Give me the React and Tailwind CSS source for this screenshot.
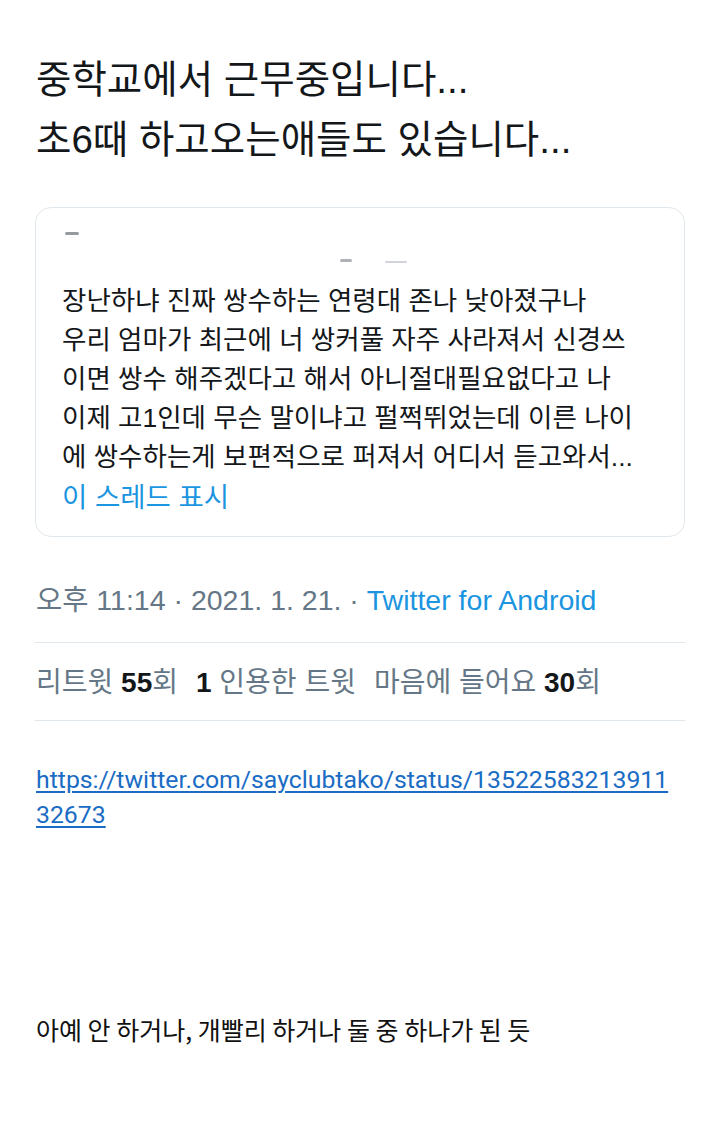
export default function App() {
  const kr = { fontFamily: '"Liberation Sans", "Noto Sans CJK KR", sans-serif' };
  return (
    <div className="w-[720px] h-[1147px] bg-white overflow-hidden" style={kr}>
      <div className="pt-[50px] px-[36px] text-[38.5px] leading-[60px] text-[#14171a]">
        <p>중학교에서 근무중입니다...</p>
        <p>초6때 하고오는애들도 있습니다...</p>
      </div>

      <div className="mx-[35px] mt-[37px] h-[330px] rounded-[16px] border border-[#e1e8ed] pl-[26px] text-[#14171a]">
        <div className="h-[74px] pt-[24px]">
          <div className="ml-[3px] h-[3px] w-[14px] rounded-full bg-[#6b7079] opacity-70 blur-[0.5px]"></div>
          <div className="mt-[22px] flex items-center">
            <div className="ml-[278px] h-[3px] w-[12px] rounded-full bg-[#7a7f88] opacity-60 blur-[0.5px]"></div>
            <div className="ml-[33px] mt-[4px] h-[2px] w-[22px] rounded-full bg-[#b0b5bd] opacity-60"></div>
          </div>
        </div>
        <div className="text-[26.5px] leading-[39px] whitespace-nowrap">
          <p>장난하냐 진짜 쌍수하는 연령대 존나 낮아졌구나</p>
          <p>우리 엄마가 최근에 너 쌍커풀 자주 사라져서 신경쓰</p>
          <p>이면 쌍수 해주겠다고 해서 아니절대필요없다고 나</p>
          <p>이제 고1인데 무슨 말이냐고 펄쩍뛰었는데 이른 나이</p>
          <p>에 쌍수하는게 보편적으로 퍼져서 어디서 듣고와서...</p>
        </div>
        <p className="text-[27.5px] leading-[42px] text-[#1b95e0]">이 스레드 표시</p>
      </div>

      <div className="mt-[43px] px-[36px] text-[28.5px] leading-[40px] text-[#657786] whitespace-nowrap">
        <span>오후 11:14 · 2021. 1. 21. · </span>
        <span className="text-[#1b95e0]">Twitter for Android</span>
      </div>

      <div className="mx-[35px] mt-[22px] h-px bg-[#e1e8ed]"></div>

      <div className="mt-[20px] px-[36px] flex items-center text-[28px] leading-[40px] text-[#657786] whitespace-nowrap">
        <span>리트윗 <b className="font-bold text-[#14171a]">55</b>회</span>
        <span className="ml-[18px]"><b className="font-bold text-[#14171a]">1</b> 인용한 트윗</span>
        <span className="ml-[18px]">마음에 들어요 <b className="font-bold text-[#14171a]">30</b>회</span>
      </div>

      <div className="mx-[35px] mt-[17px] h-px bg-[#e1e8ed]"></div>

      <div className="mt-[41px] px-[36px] text-[24.8px] leading-[35px] whitespace-nowrap" style={{ fontFamily: 'Roboto, "Noto Sans CJK KR", sans-serif' }}>
        <a href="#" className="text-[#1a6cc4] underline underline-offset-[3px]">
          https://twitter.com/sayclubtako/status/13522583213911
          <br />
          32673
        </a>
      </div>

      <p className="mt-[180px] px-[36px] text-[25px] leading-[34px] text-[#111111]" style={{ fontFamily: '"Noto Sans CJK KR", sans-serif' }}>
        아예 안 하거나, 개빨리 하거나 둘 중 하나가 된 듯
      </p>
    </div>
  );
}
